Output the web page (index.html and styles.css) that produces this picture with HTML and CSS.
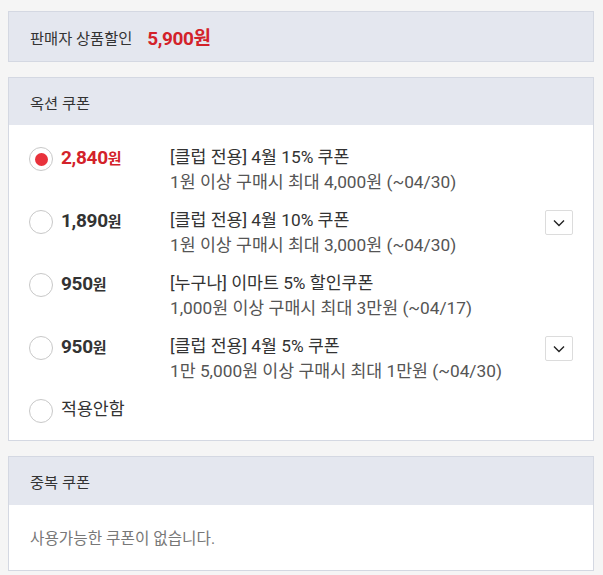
FILE: index.html
```html
<!DOCTYPE html>
<html lang="ko">
<head>
<meta charset="utf-8">
<link rel="stylesheet" href="styles.css">
</head>
<body>
<div class="page">
  <section class="box seller">
    <span class="seller-label">판매자 상품할인</span>
    <span class="seller-price">5,900원</span>
  </section>

  <section class="box">
    <header class="box-head">옥션 쿠폰</header>
    <div class="box-body coupons">
      <div class="row">
        <span class="radio checked"></span>
        <span class="price red">2,840<small>원</small></span>
        <div class="info">
          <div class="title">[클럽 전용] 4월 15% 쿠폰</div>
          <div class="sub">1원 이상 구매시 최대 4,000원 (~04/30)</div>
        </div>
      </div>
      <div class="row">
        <span class="radio"></span>
        <span class="price">1,890<small>원</small></span>
        <div class="info">
          <div class="title">[클럽 전용] 4월 10% 쿠폰</div>
          <div class="sub">1원 이상 구매시 최대 3,000원 (~04/30)</div>
        </div>
        <button class="more"><svg width="12" height="8" viewBox="0 0 12 8"><path d="M1 1.5 L6 6.5 L11 1.5" fill="none" stroke="#222" stroke-width="1.4"/></svg></button>
      </div>
      <div class="row">
        <span class="radio"></span>
        <span class="price">950<small>원</small></span>
        <div class="info">
          <div class="title">[누구나] 이마트 5% 할인쿠폰</div>
          <div class="sub">1,000원 이상 구매시 최대 3만원 (~04/17)</div>
        </div>
      </div>
      <div class="row">
        <span class="radio"></span>
        <span class="price">950<small>원</small></span>
        <div class="info">
          <div class="title">[클럽 전용] 4월 5% 쿠폰</div>
          <div class="sub">1만 5,000원 이상 구매시 최대 1만원 (~04/30)</div>
        </div>
        <button class="more"><svg width="12" height="8" viewBox="0 0 12 8"><path d="M1 1.5 L6 6.5 L11 1.5" fill="none" stroke="#222" stroke-width="1.4"/></svg></button>
      </div>
      <div class="row none">
        <span class="radio"></span>
        <span class="none-label">적용안함</span>
      </div>
    </div>
  </section>

  <section class="box">
    <header class="box-head tall">중복 쿠폰</header>
    <div class="box-body empty">사용가능한 쿠폰이 없습니다.</div>
  </section>
</div>
</body>
</html>
```
FILE: styles.css
```css
html, body {
  margin: 0;
  padding: 0;
  background: #f5f5f5;
}
body {
  font-family: Roboto, "Noto Sans CJK KR", sans-serif;
  color: #333;
  font-size: 15px;
}
.page {
  padding: 11px 9px 0 8px;
  display: flex;
  flex-direction: column;
  gap: 15px;
}
.box {
  border: 1px solid #d4d8e2;
  background: #fff;
}
.seller {
  background: #e4e7ef;
  height: 49px;
  display: flex;
  align-items: center;
  padding: 0 21px;
  gap: 15px;
}
.seller-label {
  font-size: 15.3px;
  color: #333;
}
.seller-price {
  font-size: 19px;
  font-weight: 700;
  color: #d3222a;
  letter-spacing: -0.4px;
}
.box-head {
  background: #e4e7ef;
  height: 47px;
  display: flex;
  align-items: center;
  padding: 0 21px;
  font-size: 15.3px;
  color: #333;
}
.box-head.tall {
  height: 48px;
}
.coupons {
  padding: 20px 20px 17px 20px;
  display: flex;
  flex-direction: column;
  gap: 13px;
}
.row {
  display: flex;
  align-items: flex-start;
  line-height: 25px;
}
.radio {
  width: 22px;
  height: 22px;
  border: 1px solid #c8c8c8;
  border-radius: 50%;
  margin-top: 2px;
  flex: none;
  display: flex;
  align-items: center;
  justify-content: center;
  background: #fff;
}
.radio.checked::after {
  content: "";
  width: 13px;
  height: 13px;
  border-radius: 50%;
  background: #e8323c;
}
.price {
  width: 109px;
  margin-left: 8px;
  font-size: 19px;
  font-weight: 700;
  color: #333;
  letter-spacing: -0.3px;
  flex: none;
}
.price small {
  font-size: 15px;
}
.price.red {
  color: #d3222a;
}
.info {
  flex: 1;
  font-size: 17.3px;
}
.title {
  color: #333;
}
.sub {
  color: #555;
}
.more {
  width: 28px;
  height: 25px;
  margin-top: 2px;
  border: 1px solid #dcdcdc;
  border-radius: 2px;
  background: #fff;
  padding: 0;
  display: flex;
  align-items: center;
  justify-content: center;
  flex: none;
}
.none-label {
  margin-left: 8px;
  font-size: 17.3px;
  color: #333;
}
.empty {
  height: 65px;
  display: flex;
  align-items: center;
  padding: 0 21px;
  color: #777;
  font-size: 15.7px;
}
```
